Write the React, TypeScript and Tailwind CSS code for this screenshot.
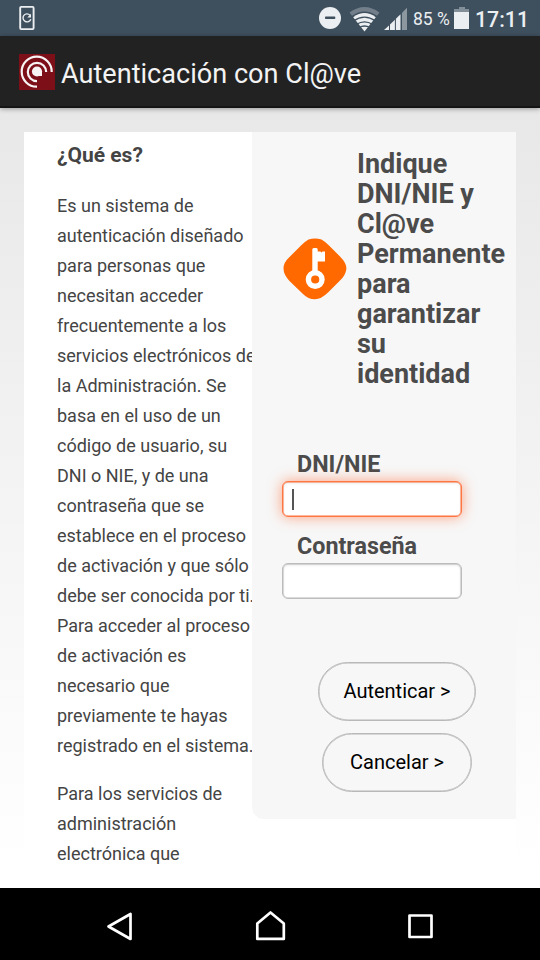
import type { ReactNode } from 'react';

const intro = [
  'Es un sistema de',
  'autenticación diseñado',
  'para personas que',
  'necesitan acceder',
  'frecuentemente a los',
  'servicios electrónicos de',
  'la Administración. Se',
  'basa en el uso de un',
  'código de usuario, su',
  'DNI o NIE, y de una',
  'contraseña que se',
  'establece en el proceso',
  'de activación y que sólo',
  'debe ser conocida por ti.',
  'Para acceder al proceso',
  'de activación es',
  'necesario que',
  'previamente te hayas',
  'registrado en el sistema.',
];
const services = ['Para los servicios de', 'administración', 'electrónica que'];
const title = ['Indique', 'DNI/NIE y', 'Cl@ve', 'Permanente', 'para', 'garantizar', 'su', 'identidad'];

function Lines({ items }: { items: string[] }) {
  return (
    <>
      {items.map((line) => (
        <span key={line} className="block whitespace-nowrap">
          {line}
        </span>
      ))}
    </>
  );
}

function StatusBar() {
  return (
    <div className="flex h-9 shrink-0 items-center bg-[#3e4f5e] text-[#eceff1]">
      <svg className="ml-[18px]" width="18" height="26" viewBox="0 0 18 26" fill="none" stroke="currentColor">
        <rect x="2.2" y="1.9" width="13.4" height="22.2" rx="1" strokeWidth="1.9" />
        <path d="M12 10.2A4 4 0 1 0 12.8 14.2" strokeWidth="1.4" />
        <path d="M13 8.7v3.7H9.3z" fill="currentColor" stroke="none" />
      </svg>
      <svg className="ml-[282px]" width="90" height="36" viewBox="318 0 90 36" fill="currentColor">
        <circle cx="330" cy="18" r="11" />
        <rect x="325" y="16.6" width="10.3" height="2.5" rx="0.8" fill="#3e4f5e" />
        <path d="M349.5 12.6q15-11 30 0l-2.5 3.2q-12.5-8.6-25 0z" opacity="0.3" />
        <path d="M364.5 31.5l-11.3-14.3q11.3-8.4 22.6 0z" />
        <g fill="none" stroke="#3e4f5e" strokeWidth="1.3">
          <path d="M353.5 20.9q11-7.5 22 0" />
          <path d="M356.5 24.3q8-5 16 0" />
          <path d="M359 27.5q5.5-3 11 0" />
        </g>
        <path d="M384 30l5-4.6V30z" />
        <path d="M390 30v-5.6l4.9-4.6V30z" />
        <path d="M395.9 30V18.7l4.6-4.4V30z" />
        <path d="M402 30V12.7l5-4.9V30z" opacity="0.45" />
      </svg>
      <span className="mt-[2px] ml-[5px] w-[37px] whitespace-nowrap text-[17.5px]">85 %</span>
      <svg className="ml-[4px]" width="15" height="36" viewBox="0 0 15 36" fill="currentColor">
        <path d="M5 7h6v2h4v3H0V9h5z" opacity="0.4" />
        <rect y="12" width="15" height="17" />
      </svg>
      <span className="mt-[3px] ml-[6px] whitespace-nowrap text-[21.3px] font-medium">17:11</span>
    </div>
  );
}

function AppBar() {
  return (
    <header className="z-10 flex h-[72px] shrink-0 items-center border-b-2 border-[#151515] bg-[#222] pl-[19px] shadow-[0_1px_5px_rgba(0,0,0,0.35)]">
      <svg width="36" height="36" viewBox="0 0 36 36" className="mt-[2px] bg-[#7c0f17]">
        <g fill="none" stroke="#f8f4f4" strokeWidth="2.2">
          <path d="M32.7 18A15 15 0 1 0 18 32.7" />
          <path d="M27.2 18A9.2 9.2 0 1 0 18 27.2" />
        </g>
        <circle cx="18" cy="17.5" r="5.1" fill="#f8f4f4" />
        <path d="M18 17.5h5v4.5h-5z" fill="#f8f4f4" />
      </svg>
      <h1 className="mt-[6px] ml-[6px] whitespace-nowrap text-[27.1px] leading-9 text-[#f3f3f3]">Autenticación con Cl@ve</h1>
    </header>
  );
}

function KeyBadge() {
  return (
    <svg className="mt-[89px] ml-[31px] shrink-0" width="64" height="64" viewBox="0 0 64 64">
      <path
        d="M25.5 1.5Q32-.7 38.5 1.5Q42 3.5 46 7.5L57 18.5Q64 25.5 63.3 31.5Q62.5 37.5 57 42.5L45 54.5Q38 61.3 32 61.3Q25 61.3 20 56L6.5 43Q.5 36.5 .5 30.5Q.5 24.5 6 19.5L18 7.5Q22 3.5 25.5 1.5Z"
        fill="#ff6900"
      />
      <path d="M29.3 34.5V11.5q0-1.5 1.5-1.5h2.5q1.4 0 1.4 1.5v2H37.5l1 1 1-1H42V23.5H34.7v11z" fill="white" />
      <circle cx="32.2" cy="41.5" r="6.8" fill="none" stroke="white" strokeWidth="5.4" />
    </svg>
  );
}

function PillButton({ children, width }: { children: ReactNode; width: string }) {
  return (
    <button
      type="button"
      className={`${width} h-[59px] shrink-0 whitespace-nowrap rounded-full border border-[#b8b8b8] pb-px text-[20px] text-black shadow-[inset_0_0_0_0.5px_#b8b8b8]`}
    >
      {children}
    </button>
  );
}

function LoginPanel() {
  return (
    <section className="flex h-[687px] w-[264px] shrink-0 flex-col rounded-bl-[12px] bg-[#f7f7f7] text-[#4b4b4b]">
      <div className="flex h-[313px] pt-[17px]">
        <KeyBadge />
        <h2 className="ml-[10px] text-[27px] leading-[30px] font-bold">
          <Lines items={title} />
        </h2>
      </div>
      <form className="flex flex-col pl-[30px]">
        <label htmlFor="dni" className="h-[36px] pt-[4px] pl-[15px] text-[23.3px] leading-[30px] font-bold">DNI/NIE</label>
        <div
          id="dni"
          className="flex h-[36px] w-[180px] items-center rounded-[6px] border border-[#ff7643] bg-white pl-[9px] shadow-[0_0_14px_rgba(255,105,50,0.6),inset_0_0_0_0.5px_#ff7643,inset_0_1px_3px_rgba(0,0,0,0.12)]"
        >
          <span className="h-[21px] w-[1.5px] bg-[#555]" />
        </div>
        <label htmlFor="clave" className="h-[46px] pt-[14px] pl-[15px] text-[23.3px] leading-[30px] font-bold">Contraseña</label>
        <div id="clave" className="h-[36px] w-[180px] rounded-[6px] border border-[#bcbcbc] bg-white shadow-[inset_0_0_0_0.5px_#bcbcbc,inset_0_1px_3px_rgba(0,0,0,0.12)]" />
      </form>
      <div className="mt-[63px] flex w-[290px] flex-col items-center gap-[12px]">
        <PillButton width="w-[158px]">Autenticar &gt;</PillButton>
        <PillButton width="w-[150px]">Cancelar &gt;</PillButton>
      </div>
    </section>
  );
}

function NavBar() {
  return (
    <nav className="flex h-[72px] shrink-0 items-center justify-between bg-black px-[104px]">
      <svg width="32" height="36" viewBox="0 0 32 36" fill="none" stroke="white" strokeWidth="2.7" strokeLinejoin="round">
        <path d="M26.5 8v25L4.5 20.5z" />
      </svg>
      <svg width="32" height="36" viewBox="0 0 32 36" fill="none" stroke="white" strokeWidth="2.7" strokeLinejoin="round">
        <path d="M3.3 32.9V17.5L16.5 6.5l13.3 11v15.4z" />
      </svg>
      <svg width="32" height="36" viewBox="0 0 32 36" fill="none" stroke="white" strokeWidth="2.7" strokeLinejoin="round">
        <path d="M5.5 9.5h22v21.5h-22z" />
      </svg>
    </nav>
  );
}

export default function App() {
  return (
    <div className="flex h-[960px] w-[540px] flex-col overflow-hidden font-[Roboto,sans-serif] text-[#444]">
      <StatusBar />
      <AppBar />
      <main className="min-h-0 flex-1 overflow-hidden bg-linear-to-b from-[#e8e8e8] to-white to-[760px] px-6 pt-6">
        <div className="flex h-full items-start bg-white">
          <article className="h-full w-[228px] shrink-0 overflow-hidden pt-[8px] pl-[33px] text-[18px] leading-[30px]">
            <h2 className="mb-[21px] text-[21px] font-bold">¿Qué es?</h2>
            <p className="mb-[18px]">
              <Lines items={intro} />
            </p>
            <p>
              <Lines items={services} />
            </p>
          </article>
          <LoginPanel />
        </div>
      </main>
      <NavBar />
    </div>
  );
}
